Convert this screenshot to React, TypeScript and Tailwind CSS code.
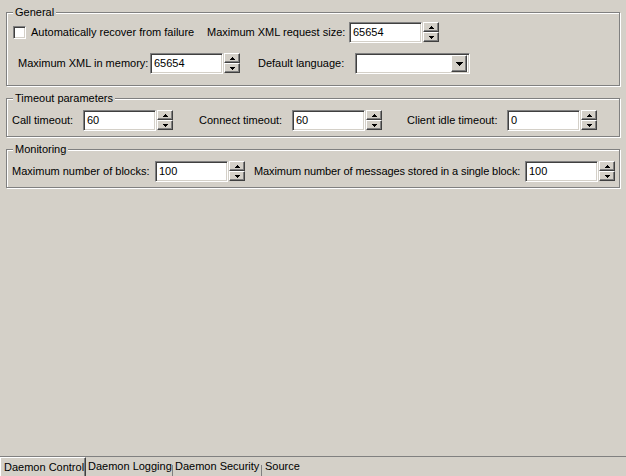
import React from "react";

const sunken =
  "border border-t-[#808080] border-l-[#808080] border-b-white border-r-white shadow-[inset_1px_1px_0_#404040,inset_-1px_-1px_0_#d4d0c8]";
const raised =
  "border border-t-white border-l-white border-b-[#404040] border-r-[#404040] shadow-[inset_-1px_-1px_0_#808080]";

function Arrow({ up }: { up?: boolean }) {
  return (
    <svg width="5" height="3" viewBox="0 0 5 3" shapeRendering="crispEdges">
      <polygon points={up ? "2,0 3,0 5,3 0,3" : "0,0 5,0 3,3 2,3"} fill="#000" />
    </svg>
  );
}

function Spinner() {
  return (
    <div className="ml-px flex h-[20px] w-[16px] shrink-0 flex-col">
      <div className={`${raised} flex h-[10px] items-center justify-center bg-[#d4d0c8]`}>
        <Arrow up />
      </div>
      <div className={`${raised} flex h-[10px] items-center justify-center bg-[#d4d0c8]`}>
        <Arrow />
      </div>
    </div>
  );
}

function NumberField({ value }: { value: string }) {
  return (
    <div className="flex shrink-0 items-start">
      <div className={`${sunken} flex h-[21px] w-[73px] items-center bg-white pl-[3px] text-black`}>{value}</div>
      <Spinner />
    </div>
  );
}

function Label({ className, children }: { className: string; children: React.ReactNode }) {
  return <span className={`shrink-0 whitespace-nowrap ${className}`}>{children}</span>;
}

function Group({ title, className, children }: { title: string; className?: string; children: React.ReactNode }) {
  return (
    <div
      className={`relative border border-[#808080] shadow-[1px_1px_0_#fff,inset_1px_1px_0_#fff] ${className ?? ""}`}
    >
      <span className="absolute left-[6px] top-[-8px] bg-[#d4d0c8] px-[2px] leading-[14px]">{title}</span>
      {children}
    </div>
  );
}

export default function App() {
  return (
    <div
      className="flex h-[476px] w-[626px] flex-col bg-[#d4d0c8] text-[11px] text-black"
      style={{ fontFamily: '"Liberation Sans", Arial, sans-serif' }}
    >
      <div className="flex-1 pl-[6px] pr-[6px] pt-[12px]">
        <Group title="General" className="pb-[11px] pl-[6px] pt-[9px]">
          <div className="flex h-[21px] items-center">
            <div className="flex w-[194px] shrink-0 items-center">
              <div className={`${sunken} h-[13px] w-[13px] bg-white`} />
              <span className="ml-[5px] whitespace-nowrap">Automatically recover from failure</span>
            </div>
            <Label className="w-[142px]">Maximum XML request size:</Label>
            <NumberField value="65654" />
          </div>
          <div className="mt-[10px] flex h-[21px] items-center pl-[5px]">
            <Label className="w-[132px]">Maximum XML in memory:</Label>
            <NumberField value="65654" />
            <Label className="ml-[18px] w-[97px]">Default language:</Label>
            <div className={`${sunken} flex h-[21px] w-[115px] shrink-0 items-center justify-end bg-white p-[2px]`}>
              <div className={`${raised} flex h-[17px] w-[16px] items-center justify-center bg-[#d4d0c8]`}>
                <svg width="7" height="4" viewBox="0 0 7 4" shapeRendering="crispEdges">
                  <polygon points="0,0 7,0 4,4 3,4" fill="#000" />
                </svg>
              </div>
            </div>
          </div>
        </Group>

        <Group title="Timeout parameters" className="mt-[12px] pb-[5px] pl-[5px] pt-[11px]">
          <div className="flex h-[21px] items-center">
            <Label className="w-[71px]">Call timeout:</Label>
            <NumberField value="60" />
            <Label className="ml-[26px] w-[93px]">Connect timeout:</Label>
            <NumberField value="60" />
            <Label className="ml-[25px] w-[100px]">Client idle timeout:</Label>
            <NumberField value="0" />
          </div>
        </Group>

        <Group title="Monitoring" className="mt-[12px] pb-[5px] pl-[5px] pt-[11px]">
          <div className="flex h-[21px] items-center">
            <Label className="w-[143px]">Maximum number of blocks:</Label>
            <NumberField value="100" />
            <Label className="ml-[9px] w-[271px] tracking-[-0.1px]">
              Maximum number of messages stored in a single block:
            </Label>
            <NumberField value="100" />
          </div>
        </Group>
      </div>

      <div className="flex h-[20px] border-t border-[#808080]">
        <div className="flex w-[86px] items-center border-l border-r border-t border-l-white border-r-[#404040] border-t-white pl-[3px] shadow-[inset_-1px_0_0_#808080]">
          Daemon Control
        </div>
        <div className="flex w-[86px] items-center pl-[2px]">Daemon Logging</div>
        <div className="mt-[8px] w-px bg-[#808080]" />
        <div className="flex w-[88px] items-center pl-[2px]">Daemon Security</div>
        <div className="mt-[8px] w-px bg-[#808080]" />
        <div className="flex items-center pl-[3px]">Source</div>
      </div>
    </div>
  );
}
